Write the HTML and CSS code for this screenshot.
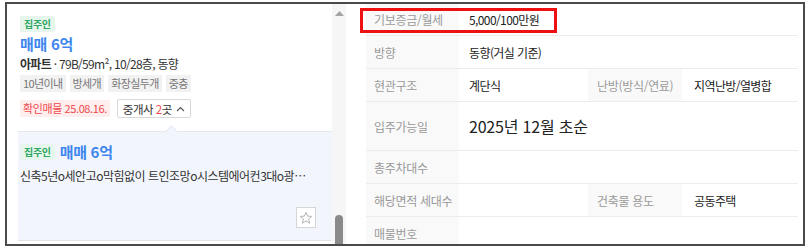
FILE: index.html
```html
<!DOCTYPE html>
<html lang="ko">
<head>
<meta charset="utf-8">
<link rel="stylesheet" href="styles.css">
</head>
<body>
<div class="frame">
  <div class="list">
    <div class="list-inner">
      <div class="card first">
        <span class="badge">집주인</span>
        <div class="price">매매 6억</div>
        <div class="info"><b>아파트</b> · 79B/59m², 10/28층, 동향</div>
        <div class="tags">
          <span class="tag">10년이내</span>
          <span class="tag">방세개</span>
          <span class="tag">화장실두개</span>
          <span class="tag">중층</span>
        </div>
        <div class="meta">
          <span class="confirm">확인매물 25.08.16.</span>
          <span class="agents"><span class="agents-text">중개사 <em>2</em>곳</span>
            <svg width="9" height="6" viewBox="0 0 9 6"><path d="M1 5 L4.5 1.5 L8 5" fill="none" stroke="#555" stroke-width="1.1"/></svg>
          </span>
        </div>
      </div>
      <div class="card sub">
        <div class="sub-head"><span class="badge">집주인</span><span class="price small">매매 6억</span></div>
        <div class="desc">신축5년o세안고o막힘없이 트인조망o시스템에어컨3대o광폭펀트리o수납공간많음</div>
        <div class="star-row">
          <span class="star">
            <svg width="14" height="14" viewBox="0 0 14 14"><path d="M7 1.3 L8.6 5.1 L12.7 5.4 L9.6 8.1 L10.6 12.2 L7 10 L3.4 12.2 L4.4 8.1 L1.3 5.4 L5.4 5.1 Z" fill="none" stroke="#b5b5b5" stroke-width="1" stroke-linejoin="round"/></svg>
          </span>
        </div>
      </div>
    </div>
    <div class="scrollbar">
      <svg class="arrow" width="9" height="5" viewBox="0 0 9 5"><path d="M0 5 L4.5 0 L9 5 Z" fill="#a3a3a3"/></svg>
      <div class="thumb"></div>
    </div>
  </div>
  <div class="detail">
    <div class="table">
      <div class="row">
        <div class="lbl">기보증금/월세</div><div class="val wide">5,000/100만원</div>
      </div>
      <div class="row">
        <div class="lbl">방향</div><div class="val wide">동향(거실 기준)</div>
      </div>
      <div class="row">
        <div class="lbl">현관구조</div><div class="val">계단식</div>
        <div class="lbl lbl2">난방(방식/연료)</div><div class="val val2">지역난방/열병합</div>
      </div>
      <div class="row tall">
        <div class="lbl">입주가능일</div><div class="val wide big">2025년 12월 초순</div>
      </div>
      <div class="row">
        <div class="lbl">총주차대수</div><div class="val wide"></div>
      </div>
      <div class="row">
        <div class="lbl">해당면적 세대수</div><div class="val"></div>
        <div class="lbl lbl2">건축물 용도</div><div class="val val2">공동주택</div>
      </div>
      <div class="row">
        <div class="lbl">매물번호</div><div class="val wide"></div>
      </div>
    </div>
    <div class="highlight"></div>
  </div>
</div>
</body>
</html>
```

FILE: styles.css
```css
* { box-sizing: border-box; }
html, body { margin: 0; padding: 0; background: #fff; }
body {
  font-family: "Noto Sans CJK KR", "Noto Sans", sans-serif;
  color: #222;
}
.frame {
  margin: 2px 0 0 5px;
  width: 800px;
  height: 244px;
  border: 2px solid #4a4a4a;
  display: flex;
  overflow: hidden;
}
.list {
  width: 339px;
  display: flex;
  border-right: 2px solid #e2e2e2;
  flex: none;
}
.list-inner {
  width: 325px;
  padding-left: 11px;
  flex: none;
}
.card.first {
  padding: 5px 0 0 2px;
  height: 127px;
}
.badge {
  display: inline-block;
  font-size: 10px;
  font-weight: 700;
  color: #2ea862;
  background: #e7f6ed;
  height: 16px;
  line-height: 16px;
  padding: 0 4px;
  border-radius: 2px;
  letter-spacing: -0.3px;
}
.price {
  margin-top: 1px;
  font-size: 15px;
  font-weight: 700;
  color: #3e86ee;
  line-height: 20px;
  letter-spacing: -0.3px;
}
.info {
  margin-top: 2px;
  font-size: 12px;
  line-height: 16px;
  color: #333;
  letter-spacing: -0.7px;
}
.info b { font-weight: 700; }
.tags {
  margin-top: 3px;
  display: flex;
  gap: 4px;
}
.tag {
  font-size: 11px;
  color: #777;
  background: #f2f2f2;
  height: 17px;
  line-height: 17px;
  padding: 0 3px;
  letter-spacing: -0.6px;
}
.meta {
  margin-top: 7px;
  display: flex;
  align-items: center;
  gap: 7px;
}
.confirm {
  font-size: 11px;
  color: #f2484b;
  background: #feeeee;
  height: 17px;
  line-height: 17px;
  padding: 0 3px;
  letter-spacing: -0.4px;
}
.agents {
  display: inline-flex;
  align-items: center;
  gap: 4px;
  font-size: 11.5px;
  color: #333;
  border: 1px solid #d9d9d9;
  border-radius: 2px;
  height: 19px;
  padding: 0 5px;
  letter-spacing: -0.5px;
}
.agents em { font-style: normal; color: #f2484b; }
.card.sub {
  position: relative;
  width: 314px;
  height: 110px;
  background: #f2f6fc;
  border-top: 1px solid #e3e7ee;
  border-bottom: 1px solid #e0e3e8;
  padding: 10px 0 0 2px;
}
.card.sub::before {
  content: "";
  position: absolute;
  left: 149px;
  top: -5px;
  width: 8px;
  height: 8px;
  background: #f2f6fc;
  border-top: 1px solid #e3e7ee;
  border-left: 1px solid #e3e7ee;
  transform: rotate(45deg);
}
.sub-head { display: flex; align-items: center; gap: 5px; }
.price.small { margin-top: 0; font-size: 15px; }
.desc {
  margin-top: 6px;
  font-size: 12px;
  color: #333;
  line-height: 16px;
  white-space: nowrap;
  overflow: hidden;
  text-overflow: ellipsis;
  width: 296px;
  letter-spacing: -0.5px;
}
.star-row {
  display: flex;
  justify-content: flex-end;
  padding-right: 16px;
  margin-top: 23px;
}
.star {
  width: 20px;
  height: 21px;
  background: #fff;
  border: 1px solid #d6d6d6;
  display: flex;
  align-items: center;
  justify-content: center;
}
.scrollbar {
  position: relative;
  width: 14px;
  flex: none;
  background: #f6f6f6;
}
.scrollbar .arrow { position: absolute; top: 7px; left: 3px; }
.thumb {
  position: absolute;
  left: 3px;
  bottom: 0;
  width: 8px;
  height: 29px;
  background: #8a8a8a;
  border-radius: 4px 4px 0 0;
}
.detail {
  position: relative;
  flex: 1;
  padding-left: 20px;
}
.table { width: 432px; }
.row {
  display: grid;
  grid-template-columns: 93px 129px 94px 116px;
  height: 33px;
  border-bottom: 1px solid #ececec;
  font-size: 12px;
  letter-spacing: -0.3px;
}
.row:first-child { height: 32px; }
.row.tall { height: 49px; }
.row > div { display: flex; align-items: center; }
.lbl {
  background: #f9f9f9;
  color: #999;
  padding-left: 8px;
}
.lbl2 { padding-left: 9px; }
.val { padding-left: 10px; color: #222; letter-spacing: -0.6px; }
.val2 { padding-left: 12px; }
.val.wide { grid-column: 2 / 5; }
.val.big { font-size: 16px; letter-spacing: -0.2px; }
.highlight {
  position: absolute;
  left: 14px;
  top: 4px;
  width: 197px;
  height: 25px;
  border: 3px solid #ee1111;
}
```
